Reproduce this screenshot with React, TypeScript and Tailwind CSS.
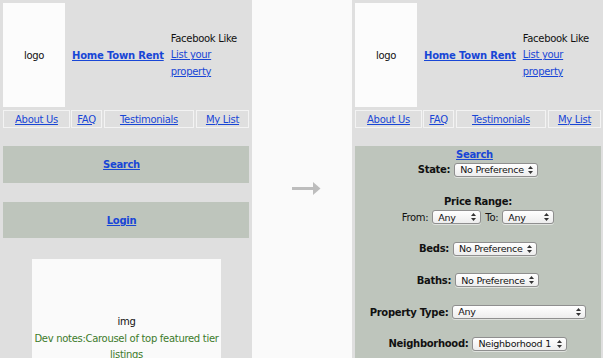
import React from "react";

const link = "text-[#1846d6] underline underline-offset-[1px]";

function Arrows() {
  return (
    <svg width="5" height="8" viewBox="0 0 5 8" className="shrink-0 ml-[2px]">
      <path d="M2.5 0 L5 3 L0 3 Z" fill="#333" />
      <path d="M2.5 8 L5 5 L0 5 Z" fill="#333" />
    </svg>
  );
}

function Select({ text, w }: { text: string; w: string }) {
  return (
    <div
      className={`${w} h-[14px] inline-flex items-center justify-between rounded-[3px] border border-[#8f8f8f] bg-gradient-to-b from-white to-[#ededed] pl-[5px] pr-[4px] text-[9.5px] leading-none text-[#111] shadow-[0_1px_0_rgba(255,255,255,0.5)]`}
    >
      <span className="tracking-[-0.25px] whitespace-nowrap">{text}</span>
      <Arrows />
    </div>
  );
}

function Header() {
  return (
    <>
      <div className="flex items-center">
        <div className="w-[62px] h-[104px] shrink-0 bg-[#fcfcfc] flex items-center justify-center text-[#111]">
          logo
        </div>
        <a className={`${link} ml-[7px] font-bold tracking-[-0.2px] whitespace-nowrap shrink-0`}>Home Town Rent</a>
        <div className="ml-[7px] w-[76px] shrink-0 leading-[16.5px] pt-[1px]">
          <div className="text-[#111] whitespace-nowrap">Facebook Like</div>
          <a className={link}>List your property</a>
        </div>
      </div>
      <div className="mt-[3px] flex h-[18px]">
        <div className="w-[67px] border border-[#f3f3f3] flex items-center justify-center">
          <a className={link}>About Us</a>
        </div>
        <div className="ml-[1px] w-[31px] border border-[#f3f3f3] flex items-center justify-center">
          <a className={link}>FAQ</a>
        </div>
        <div className="ml-[2px] w-[90px] border border-[#f3f3f3] flex items-center justify-center">
          <a className={link}>Testimonials</a>
        </div>
        <div className="ml-[2px] w-[53px] border border-[#f3f3f3] flex items-center justify-center">
          <a className={link}>My List</a>
        </div>
      </div>
    </>
  );
}

function Row({ children }: { children: React.ReactNode }) {
  return <div className="h-[15.8px] flex items-center justify-center gap-[4px]">{children}</div>;
}
function Blank() {
  return <div className="h-[15.8px]" />;
}
function Label({ children }: { children: React.ReactNode }) {
  return <span className="font-bold text-[#111] tracking-[-0.3px]">{children}</span>;
}

export default function App() {
  return (
    <div className="w-[603px] h-[358px] overflow-hidden flex bg-[#fafafa] font-['DejaVu_Sans',sans-serif] text-[10px] tracking-[-0.3px]">
      {/* Left panel */}
      <div className="w-[252px] shrink-0 bg-[#dfdfdf] pt-[3px] pl-[3px] pr-[3px]">
        <Header />
        <div className="mt-[18px] h-[37px] bg-[#bec5bc] flex items-center justify-center pr-[9px]">
          <a className={`${link} font-bold`}>Search</a>
        </div>
        <div className="mt-[19px] h-[36px] bg-[#bec5bc] flex items-center justify-center pr-[9px]">
          <a className={`${link} font-bold`}>Login</a>
        </div>
        <div className="mt-[21px] ml-[29px] w-[189px] h-[120px] bg-[#fafafa] pt-[55px] px-[2px] text-center leading-[16.5px]">
          <div className="text-[#111]">img</div>
          <div className="text-[#3d7a2b]">Dev notes:Carousel of top featured tier listings</div>
        </div>
      </div>

      {/* Middle arrow */}
      <div className="w-[100px] shrink-0 pl-[40px] pt-[182px]">
        <svg width="29" height="13" viewBox="0 0 29 13">
          <rect x="0" y="5" width="22" height="3" fill="#bdbdbd" />
          <path d="M21 0 L28.5 6.5 L21 13 Z" fill="#bdbdbd" />
        </svg>
      </div>

      {/* Right panel */}
      <div className="w-[251px] shrink-0 bg-[#dfdfdf] pt-[3px] pl-[3px]">
        <Header />
        <div className="mt-[18px] w-[246px] h-[220px] bg-[#bec5bc]">
          <div className="h-[16px] flex items-center justify-center pr-[7px]">
            <a className={`${link} font-bold`}>Search</a>
          </div>
          <Row>
            <Label>State:</Label>
            <Select text="No Preference" w="w-[84px]" />
          </Row>
          <Blank />
          <Row>
            <Label>Price Range:</Label>
          </Row>
          <Row>
            <span className="text-[#111]">From:</span>
            <Select text="Any" w="w-[49px]" />
            <span className="text-[#111]">To:</span>
            <Select text="Any" w="w-[52px]" />
          </Row>
          <Blank />
          <Row>
            <Label>Beds:</Label>
            <Select text="No Preference" w="w-[84px]" />
          </Row>
          <Blank />
          <Row>
            <Label>Baths:</Label>
            <Select text="No Preference" w="w-[84px]" />
          </Row>
          <Blank />
          <Row>
            <Label>Property Type:</Label>
            <Select text="Any" w="w-[134px]" />
          </Row>
          <Blank />
          <Row>
            <Label>Neighborhood:</Label>
            <Select text="Neighborhood 1" w="w-[95px]" />
          </Row>
        </div>
      </div>
    </div>
  );
}
